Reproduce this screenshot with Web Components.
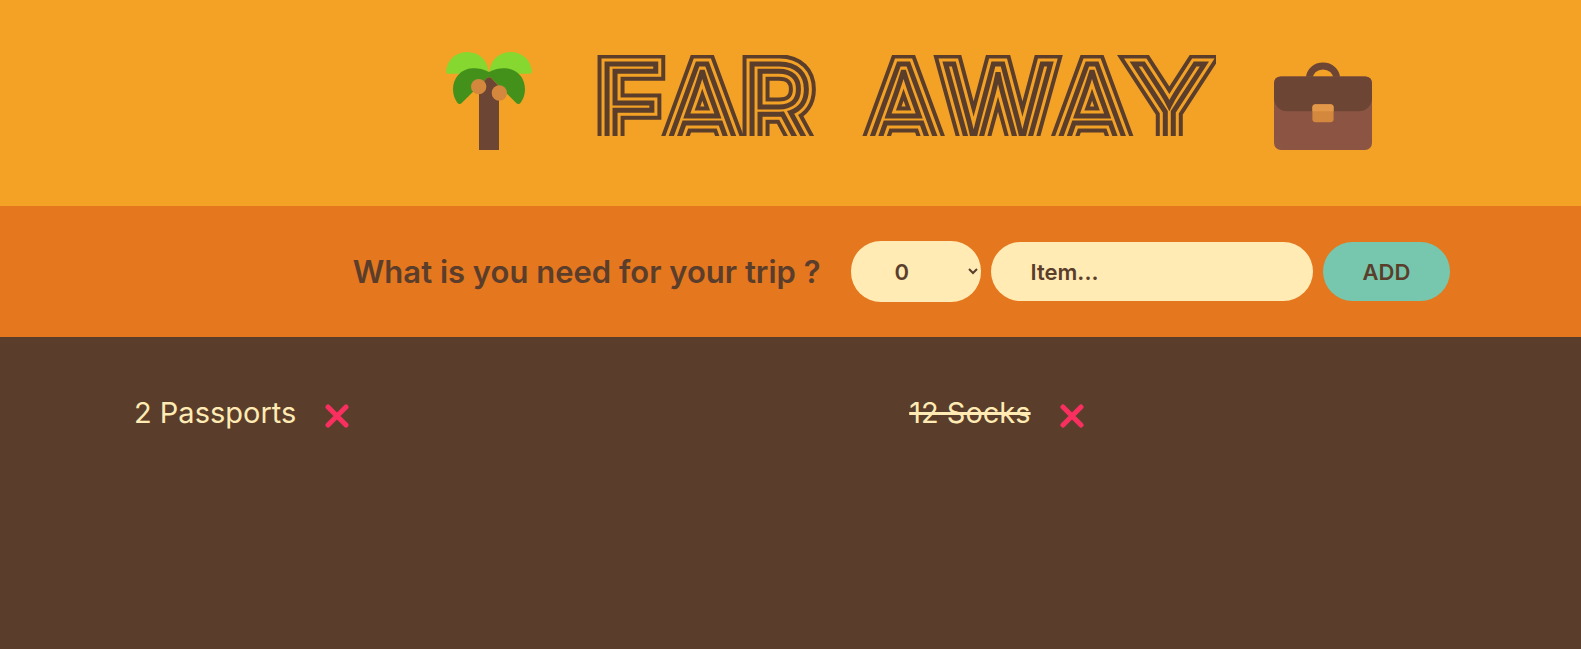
<!DOCTYPE html>
<html lang="en">
<head>
<meta charset="utf-8">
<meta name="viewport" content="width=device-width, initial-scale=1">
<title>Far Away</title>
<style>
  :root {
    --sun: #f4a226;
    --orange: #e5771f;
    --brown: #5a3e2b;
    --cream: #ffebb3;
    --mint: #76c7ad;
  }
  * { box-sizing: border-box; }
  body { margin: 0; color: var(--brown); font-family: Inter, "Open Sans", sans-serif; }
</style>
</head>
<body>
<far-away-app></far-away-app>

<script>
const define = (name, html) => {
  const template = document.createElement('template');
  template.innerHTML = html;
  customElements.define(name, class extends HTMLElement {
    constructor() {
      super();
      this.attachShadow({ mode: 'open' }).append(template.content.cloneNode(true));
    }
  });
};

define('palm-icon', `
  <style>:host { display: block; width: 98px; height: 98px; } svg { display: block; width: 100%; height: 100%; }</style>
  <svg viewBox="30 35 294 294" aria-hidden="true">
    <path fill="#86d72f" d="M54 100q-6 0-6-7C51 58 78 35 112 35c36 0 61 25 64 61v4zM300 100q6 0 6-7C302 58 276 35 242 35c-36 0-61 25-64 61v4z"/>
    <path fill="#43911b" d="M177 95C157 84 140 83 127 84c-34 2-58 28-58 63 0 16 5 30 13 40 5 6 10 4 14 0l74-73q7-6 14 0l74 73c4 4 9 6 14 0 8-10 13-24 13-40 0-35-24-61-58-63-13-1-30 0-50 11z"/>
    <path fill="#6d4534" d="M147 137l23-23q7-6 14 0l23 23v192h-60z"/>
    <circle cx="146" cy="139" r="23" fill="#d3883e"/><circle cx="208" cy="158" r="23" fill="#d3883e"/>
  </svg>`);

define('case-icon', `
  <style>:host { display: block; width: 98px; height: 98px; } svg { display: block; width: 100%; height: 100%; }</style>
  <svg viewBox="39 4 296 296" aria-hidden="true">
    <path d="M146 83a41 37 0 0 1 82 0" fill="none" stroke="#6d4534" stroke-width="21"/>
    <rect x="39" y="78" width="296" height="222" rx="21" fill="#8c5543"/>
    <path fill="#6d4534" d="M60 78h254q21 0 21 21v45c0 22-17 39-39 39H78c-22 0-39-17-39-39V99q0-21 21-21z"/>
    <rect x="155" y="162" width="64" height="54" rx="10" fill="#d3883e"/>
    <path fill="#e39748" d="M165 162h44q10 0 10 10v11h-64v-11q0-10 10-10z"/>
  </svg>`);

define('neon-title', `
  <style>
    :host { display: block; width: 620px; }
    svg { display: block; width: 100%; }
    text { font-family: Inter, sans-serif; font-size: 115px; font-weight: 300; font-kerning: none; }
    .a, .b, .c { stroke-linejoin: miter; stroke-miterlimit: 3; }
    .a { fill: var(--brown); stroke: var(--brown); stroke-width: 19px; }
    .b { fill: var(--sun); stroke: var(--sun); stroke-width: 11px; }
    .c { fill: var(--sun); stroke: var(--brown); stroke-width: 5px; }
  </style>
  <svg viewBox="0 0 620 206" role="img" aria-label="FAR AWAY">
    <clipPath id="band"><rect y="55" width="620" height="81"/></clipPath>
    <g clip-path="url(#band)">
      <g class="a"><text id="word" y="148"><tspan x="0">FAR </tspan><tspan x="269">AWAY</tspan></text></g>
      <use class="b" href="#word"/>
      <use class="c" href="#word"/>
    </g>
  </svg>`);

define('app-logo', `
  <style>
    :host { display: block; background: var(--sun); padding-left: 14.6%; }
    h1 { display: flex; justify-content: center; gap: 58px; margin: 0; }
    palm-icon, case-icon { margin-top: 52px; }
  </style>
  <h1><palm-icon></palm-icon><neon-title></neon-title><case-icon></case-icon></h1>`);

define('trip-form', `
  <style>
    :host { display: block; background: var(--orange); padding: 35px 0 35px 14%; }
    form { display: flex; justify-content: center; align-items: center; gap: 10px; }
    label { font-size: 31px; line-height: 40px; font-weight: 600; margin-right: 20px; white-space: nowrap; }
    select, input, button { box-sizing: border-box; height: 59px; margin: 0; border: 0; border-radius: 30px; padding: 0 40px;
      font: 600 22px Inter, sans-serif; color: var(--brown); background: var(--cream); }
    select { width: 130px; height: 61px; }
    input { width: 322px; }
    input::placeholder { color: inherit; opacity: 1; }
    button { width: 127px; background: var(--mint); }
  </style>
  <form>
    <label for="qty">What is you need for your trip ?</label>
    <select id="qty"><option>0</option><option>1</option><option>2</option><option>3</option></select>
    <input type="text" placeholder="Item..." aria-label="Item">
    <button type="button">ADD</button>
  </form>`);

define('packing-item', `
  <style>
    :host { display: flex; align-items: center; gap: 29px; color: var(--cream); font-size: 29px; line-height: 40px; }
    :host([packed]) span { text-decoration: line-through 3px; }
    button { border: 0; padding: 0; margin: 6px 0 0; background: none; }
    svg { display: block; width: 24px; height: 24px; }
  </style>
  <span><slot></slot></span>
  <button type="button" aria-label="Remove"><svg viewBox="0 0 24 24"><path d="M3 3l18 18M21 3L3 21" stroke="#f92f60" stroke-width="5" stroke-linecap="round"/></svg></button>`);

define('packing-list', `
  <style>
    :host { display: block; background: var(--brown); padding: 56px 0 56px 134px; }
    div { display: grid; grid-template-columns: 15fr 13fr; }
  </style>
  <div><slot></slot></div>`);

define('far-away-app', `
  <style>
    :host { display: flex; flex-direction: column; min-height: 100vh; }
    packing-list { flex: 1; }
  </style>
  <app-logo></app-logo>
  <trip-form></trip-form>
  <packing-list>
    <packing-item>2 Passports</packing-item>
    <packing-item packed>12 Socks</packing-item>
  </packing-list>`);
</script>
</body>
</html>
